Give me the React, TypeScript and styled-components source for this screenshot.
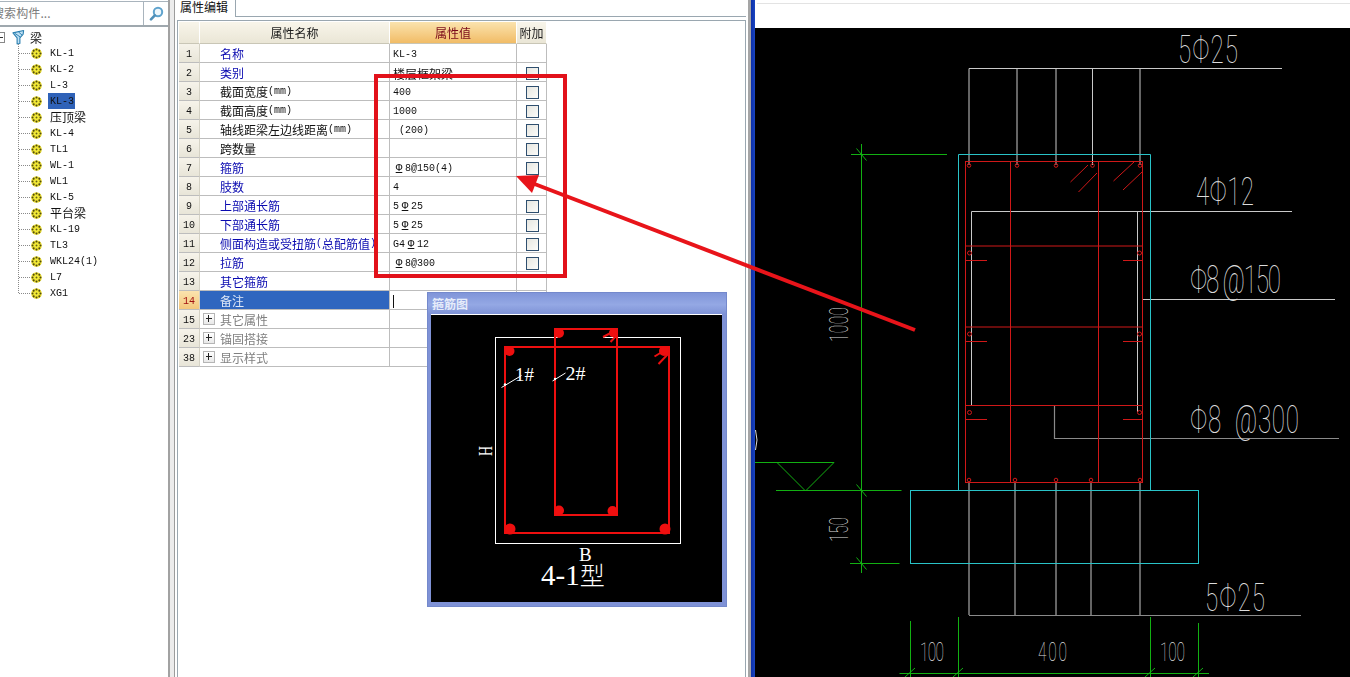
import React from 'react';
import styled, { createGlobalStyle } from 'styled-components';

const Global = createGlobalStyle`
  html, body { margin: 0; padding: 0; background: #fff; overflow: hidden; }
  #root { width: 1350px; height: 677px; }
`;

const Page = styled.div`
  position: relative;
  display: flex;
  width: 1350px;
  height: 677px;
  overflow: hidden;
  background: #fff;
  font-family: "Liberation Mono", "Noto Sans CJK SC", monospace;
  font-size: 10px;
  color: #111;
`;

/* ---------- left tree ---------- */
const LeftPanel = styled.aside`
  width: 168px;
  flex: none;
  display: flex;
  flex-direction: column;
  overflow: hidden;
`;
const SearchBar = styled.div`
  display: flex;
  margin-top: 1px;
  height: 26px;
  box-sizing: border-box;
  border-top: 1px solid #a9b4bd;
  border-bottom: 2px solid #9fa8ae;
`;
const SearchField = styled.div`
  width: 143px;
  border-right: 1px solid #a9b4bd;
  overflow: hidden;
  font: 12px/21px "Noto Sans CJK SC", sans-serif;
  color: #7c7c7c;
  text-indent: -8px;
  white-space: nowrap;
  letter-spacing: 0.1px;
`;
const SearchButton = styled.div`
  flex: 1;
  display: flex;
  align-items: center;
  justify-content: center;
`;
const Tree = styled.ul`
  position: relative;
  list-style: none;
  margin: 0;
  padding: 2px 0 0;
  will-change: transform;
  &::before {
    content: "";
    position: absolute;
    left: 18px;
    top: 17px;
    height: 249px;
    border-left: 1px dotted #8a8a8a;
  }
`;
const TreeRow = styled.li`
  position: relative;
  display: flex;
  align-items: center;
  height: 16px;
  padding-left: 31px;
  &::before {
    content: "";
    position: absolute;
    left: 19px;
    top: 8px;
    width: 11px;
    border-top: 1px dotted #8a8a8a;
  }
`;
const RootRow = styled.li`
  display: flex;
  align-items: center;
  height: 16px;
`;
const Collapse = styled.span`
  width: 4px;
  height: 9px;
  margin-right: 7px;
  border: 1px solid #888;
  border-left: 0;
  position: relative;
  &::after {
    content: "";
    position: absolute;
    left: 0;
    top: 4px;
    width: 3px;
    border-top: 1px solid #333;
  }
`;
const RootLabel = styled.span`
  margin-left: 5px;
`;
const TreeLabel = styled.span<{ $selected?: boolean }>`
  height: 16px;
  line-height: 18px;
  padding: 0 1px 0 2px;
  margin-left: 6px;
  background: ${(p) => (p.$selected ? '#2f62b8' : 'transparent')};
  white-space: nowrap;
`;
const Han = styled.span`
  font-family: "Noto Sans CJK SC", sans-serif;
  font-size: 12px;
`;
const TreeHan = styled(Han)`
  position: relative;
  top: -1px;
`;
const SteelMark = styled.span`
  display: inline-block;
  width: 12px;
  text-align: center;
  font-size: 11px;
  line-height: 11px;
  text-decoration: underline;
`;

/* ---------- splitter ---------- */
const Splitter = styled.div`
  width: 9px;
  flex: none;
  box-sizing: border-box;
  background: #ececec;
  border-left: 2px solid #a2a2a2;
  border-right: 2px solid #fff;
  box-shadow: inset -1px 0 0 #9c9c9c;
`;

/* ---------- property editor ---------- */
const Main = styled.main`
  width: 571px;
  flex: none;
  display: flex;
  flex-direction: column;
`;
const TabStrip = styled.div`
  height: 20px;
  flex: none;
  box-sizing: border-box;
  display: flex;
  align-items: flex-start;
  &::after {
    content: "";
    flex: 1;
    height: 16px;
    border-bottom: 1px solid #9aa7b0;
    margin-right: 2px;
  }
`;
const Tab = styled.div`
  width: 59px;
  height: 17px;
  box-sizing: border-box;
  padding-left: 3px;
  font: 12px/13px "Noto Sans CJK SC", sans-serif;
  color: #111;
  border-right: 1px solid #9aa7b0;
`;
const GridBox = styled.div`
  flex: 1;
  margin-right: 2px;
  padding: 1px;
  border: 1px solid #9aa7b0;
  border-bottom: 0;
`;
const Grid = styled.div`
  display: grid;
  width: 368px;
  grid-template-columns: 21px 190px 127px 30px;
  grid-template-rows: 22px;
  grid-auto-rows: 19px;
  will-change: transform;
`;
const HeaderCell = styled.div<{ $active?: boolean }>`
  display: flex;
  align-items: center;
  justify-content: center;
  font: 12px "Noto Sans CJK SC", sans-serif;
  color: ${(p) => (p.$active ? '#7a0a1a' : '#1a1a1a')};
  background: ${(p) =>
    p.$active
      ? 'linear-gradient(#fbe3ae, #f1bc66)'
      : 'linear-gradient(#f8f5ea, #eae6d6)'};
  border-right: 1px solid #fff;
  border-bottom: 1px solid #c9c6b6;
`;
const NumCell = styled.div<{ $active?: boolean }>`
  display: flex;
  align-items: center;
  justify-content: center;
  box-sizing: border-box;
  padding-top: 2px;
  font-size: 10px;
  color: ${(p) => (p.$active ? '#a01010' : '#111')};
  background: ${(p) =>
    p.$active
      ? 'linear-gradient(#fbe3ae, #f4c77c)'
      : 'linear-gradient(#f6f3ea, #e8e5d8)'};
  border-bottom: 1px solid #bdbdbd;
  border-right: 1px solid #d5d2c5;
`;
const NameCell = styled.div<{ $tone: 'blue' | 'black' | 'grey' | 'selected' }>`
  display: flex;
  align-items: center;
  box-sizing: border-box;
  padding-left: 20px;
  position: relative;
  white-space: nowrap;
  overflow: hidden;
  border-bottom: 1px solid #bdbdbd;
  border-right: 1px solid #bdbdbd;
  background: ${(p) => (p.$tone === 'selected' ? '#2f66bf' : '#fff')};
  color: ${(p) =>
    p.$tone === 'blue'
      ? '#0a0ab0'
      : p.$tone === 'grey'
      ? '#808080'
      : p.$tone === 'selected'
      ? '#dfe8f7'
      : '#111'};
`;
const Expand = styled.span`
  position: absolute;
  left: 3px;
  top: 3px;
  width: 12px;
  height: 12px;
  box-sizing: border-box;
  border: 1px solid #b5b5b5;
  background: linear-gradient(#fff, #e8e8e8);
  &::before, &::after {
    content: "";
    position: absolute;
    background: #222;
  }
  &::before { left: 2px; right: 2px; top: 4px; height: 1px; }
  &::after { top: 1px; bottom: 2px; left: 4px; width: 1px; }
`;
const ValueCell = styled.div`
  display: flex;
  align-items: center;
  box-sizing: border-box;
  padding: 2px 0 0 3px;
  white-space: pre;
  border-bottom: 1px solid #bdbdbd;
  border-right: 1px solid #bdbdbd;
`;
const Caret = styled.span`
  width: 1px;
  height: 13px;
  background: #111;
`;
const AddCell = styled.div`
  display: flex;
  align-items: center;
  justify-content: center;
  box-sizing: border-box;
  padding-top: 2px;
  border-bottom: 1px solid #bdbdbd;
  border-right: 1px solid #bdbdbd;
`;
const Check = styled.span`
  width: 13px;
  height: 13px;
  box-sizing: border-box;
  border: 1px solid #2f4f6f;
  background: linear-gradient(135deg, #e6e6e0, #fcfcfa);
  margin-left: 1px;
`;

/* ---------- stirrup dialog ---------- */
const Dialog = styled.section`
  position: absolute;
  left: 427px;
  top: 292px;
  width: 300px;
  height: 315px;
  box-sizing: border-box;
  display: flex;
  flex-direction: column;
  background: #7f92d6;
  border: 1px solid #7489cc;
  padding: 0 4px 4px 3px;
`;
const DialogTitle = styled.header`
  height: 21px;
  flex: none;
  margin: 0 -4px 0 -3px;
  padding-left: 4px;
  background: linear-gradient(#8095d9, #94a8e4 55%, #7f93d7);
  font: bold 12px/21px "Noto Sans CJK SC", sans-serif;
  color: #e6ecfa;
`;
const DialogBody = styled.div`
  flex: 1;
  background: #000;
  border-top: 1px solid #fff;
  display: flex;
`;

/* ---------- CAD ---------- */
const CadFrame = styled.div`
  flex: 1;
  display: flex;
  flex-direction: column;
  box-sizing: border-box;
  border-left: 3px solid #a5a5a5;
  position: relative;
  &::before {
    content: "";
    position: absolute;
    left: 0;
    top: 0;
    bottom: 0;
    width: 4px;
    background: linear-gradient(90deg, #0c2fa8, #1a45c0);
  }
`;
const CadTop = styled.div`
  height: 28px;
  flex: none;
  margin-left: 4px;
  box-sizing: border-box;
  padding-top: 3px;
  &::after {
    content: "";
    display: block;
    margin-left: 2px;
    border-top: 1px solid #e3e3e3;
  }
`;
const CadCanvas = styled.div`
  flex: 1;
  margin-left: 4px;
  background: #000;
  display: flex;
`;

/* ---------- overlays ---------- */
const RedFrame = styled.div`
  position: absolute;
  left: 374px;
  top: 74px;
  width: 193px;
  height: 204px;
  box-sizing: border-box;
  border: 4px solid #e2111a;
  pointer-events: none;
`;
const ArrowLayer = styled.svg`
  position: absolute;
  left: 0;
  top: 0;
  pointer-events: none;
`;

/* ---------- data ---------- */
const treeItems = ['KL-1', 'KL-2', 'L-3', 'KL-3', '压顶梁', 'KL-4', 'TL1', 'WL-1', 'WL1', 'KL-5', '平台梁', 'KL-19', 'TL3', 'WKL24(1)', 'L7', 'XG1'];

type Row = { n: number; name: string; value?: string; tone: 'blue' | 'black' | 'grey' | 'selected'; check?: boolean; expand?: boolean; caret?: boolean };
const rows: Row[] = [
  { n: 1, name: '名称', value: 'KL-3', tone: 'blue' },
  { n: 2, name: '类别', value: '楼层框架梁', tone: 'blue', check: true },
  { n: 3, name: '截面宽度(mm)', value: '400', tone: 'black', check: true },
  { n: 4, name: '截面高度(mm)', value: '1000', tone: 'black', check: true },
  { n: 5, name: '轴线距梁左边线距离(mm)', value: ' (200)', tone: 'black', check: true },
  { n: 6, name: '跨数量', tone: 'black', check: true },
  { n: 7, name: '箍筋', value: '~8@150(4)', tone: 'blue', check: true },
  { n: 8, name: '肢数', value: '4', tone: 'blue' },
  { n: 9, name: '上部通长筋', value: '5~25', tone: 'blue', check: true },
  { n: 10, name: '下部通长筋', value: '5~25', tone: 'blue', check: true },
  { n: 11, name: '侧面构造或受扭筋(总配筋值)', value: 'G4~12', tone: 'blue', check: true },
  { n: 12, name: '拉筋', value: '~8@300', tone: 'blue', check: true },
  { n: 13, name: '其它箍筋', tone: 'blue' },
  { n: 14, name: '备注', tone: 'selected', caret: true },
  { n: 15, name: '其它属性', tone: 'grey', expand: true },
  { n: 23, name: '锚固搭接', tone: 'grey', expand: true },
  { n: 38, name: '显示样式', tone: 'grey', expand: true },
];

const Mixed = ({ t, han: HanPart = Han }: { t: string; han?: typeof Han }) => (
  <>
    {t.split(/([\u4e00-\u9fff]+|~)/).map((part, i) =>
      part === '~' ? (
        <SteelMark key={i}>Φ</SteelMark>
      ) : /[\u4e00-\u9fff]/.test(part) ? (
        <HanPart key={i}>{part}</HanPart>
      ) : (
        <React.Fragment key={i}>{part}</React.Fragment>
      ),
    )}
  </>
);

/* ---------- icons ---------- */
const GearIcon = () => (
  <svg width="11" height="11" viewBox="0 0 11 11" style={{ flex: 'none' }}>
    <circle cx="5.5" cy="5.5" r="5.3" fill="#e9dc2c" />
    {[0, 45, 90, 135, 180, 225, 270, 315].map((a) => (
      <circle key={a} cx="5.5" cy="1.5" r="1" fill="#4f4a12" transform={`rotate(${a} 5.5 5.5)`} />
    ))}
    <circle cx="5.5" cy="5.5" r="2.3" fill="#f8f23e" />
    <circle cx="5.5" cy="5.5" r="1" fill="#6a6214" />
  </svg>
);
const FunnelIcon = () => (
  <svg width="13" height="17" viewBox="0 0 14 17" style={{ flex: 'none' }}>
    <path d="M1 3.5 L12.5 1 L12 5 L8.5 9 L8.5 15 L5.5 15.5 L5.5 9 Z" fill="#bfe0f4" stroke="#2a7fb0" strokeWidth="1.2" strokeLinejoin="round" />
    <path d="M3 4 L9 8 M7 2.5 L11 6" stroke="#2a7fb0" strokeWidth="1" />
  </svg>
);
const SearchIcon = () => (
  <svg width="15" height="15" viewBox="0 0 15 15">
    <circle cx="9" cy="6" r="4.2" fill="#eef7fc" stroke="#5fa3cd" strokeWidth="2" />
    <path d="M5.8 9.4 L2 13.4" stroke="#4f8fb8" strokeWidth="2.6" strokeLinecap="round" />
  </svg>
);

/* ---------- stirrup drawing ---------- */
const StirrupDrawing = () => (
  <svg width="291" height="287" viewBox="431 315 291 287" style={{ display: 'block' }}>
    <rect x="495.5" y="337.5" width="185" height="206" fill="none" stroke="#fff" />
    <path d="M558 337.5 H603" stroke="#000" strokeWidth="2" />
    <g fill="none" stroke="#ee0f0f" strokeWidth="2">
      <rect x="505" y="347" width="164" height="186" />
      <rect x="555" y="329" width="62" height="186" />
      <path d="M668.5 348 L654.5 356.5 M669 353 L658.5 364 M616.5 330 L603 337 M617 335 L610.5 342" />
    </g>
    <g fill="#ee0f0f">
      <circle cx="509.5" cy="351" r="5" />
      <circle cx="510" cy="529" r="5.5" />
      <circle cx="665" cy="529" r="5.5" />
      <circle cx="664" cy="351" r="5" />
      <circle cx="559" cy="333" r="5" />
      <circle cx="559" cy="510.5" r="5" />
      <circle cx="612.5" cy="511" r="5" />
      <circle cx="613" cy="333" r="4" />
    </g>
    <g stroke="#fff" strokeWidth="1" fill="#fff">
      <path d="M501.5 387.5 L521.5 375.5" />
      <path d="M552.5 381 L565.5 373" />
      <circle cx="505" cy="384.5" r="1.2" stroke="none" />
      <circle cx="555" cy="379" r="1.2" stroke="none" />
    </g>
    <g fill="#fff" fontFamily="'Liberation Serif', serif">
      <text x="515" y="381" fontSize="19" textLength="19" lengthAdjust="spacingAndGlyphs">1#</text>
      <text x="565.5" y="379.5" fontSize="19" textLength="20" lengthAdjust="spacingAndGlyphs">2#</text>
      <text x="579" y="561" fontSize="19">B</text>
      <text transform="translate(492 456) rotate(-90)" fontSize="18" textLength="10" lengthAdjust="spacingAndGlyphs">H</text>
      <text x="541" y="585" fontSize="29">
        4-1<tspan fontFamily="'Noto Sans CJK SC', serif" fontSize="25" fontWeight="300">型</tspan>
      </text>
    </g>
  </svg>
);

/* ---------- CAD drawing ---------- */
const CadTextBase = styled.text`
  font-family: "Roboto", "Liberation Sans", sans-serif;
  font-weight: 100;
  fill: #dcdcdc;
`;
const CAD_NARROW = 0.62;
const CadLabel = ({ x, y, w, size, rotate, children }: { x: number; y: number; w: number; size: number; rotate?: boolean; children: string }) => (
  <CadTextBase
    transform={`translate(${x} ${y})${rotate ? ' rotate(-90)' : ''} scale(${CAD_NARROW} 1)`}
    fontSize={size}
    textLength={w / CAD_NARROW}
    lengthAdjust="spacing"
    xmlSpace="preserve"
  >
    {children}
  </CadTextBase>
);
const white = '#c9c9c9';
const green = '#12b012';
const cyan = '#29c3c8';
const red = '#d01818';
const steelTop = [969, 1017, 1056, 1092.5, 1140];
const steelBottom = [969, 1015, 1056, 1091, 1140];

const Tick = ({ x, y }: { x: number; y: number }) => (
  <path d={`M${x - 5} ${y - 6} L${x + 5} ${y + 6}`} stroke={green} strokeWidth="1" />
);

const CadDrawing = () => (
  <svg width="595" height="649" viewBox="755 28 595 649" style={{ display: 'block' }}>
    <g stroke={white} strokeWidth="1" fill="none">
      <path d="M969 68.5 H1282" />
      {steelTop.map((x) => (
        <path key={x} d={`M${x} 68.5 V165`} />
      ))}
      <path d="M971.5 405 V211.5 H1292" />
      <path d="M1137.5 211.5 V412" />
      <path d="M1142 299.5 H1335" />
      {steelBottom.map((x) => (
        <path key={x} d={`M${x} 483 V615`} />
      ))}
    </g>
    <g stroke="#8a8a8a" strokeWidth="1.2" fill="none">
      <path d="M1054.5 405 V438.5 H1339" />
      <path d="M969 615.5 H1301" />
    </g>
    <g stroke={cyan} strokeWidth="1" fill="none">
      <path d="M958.5 490.5 V154.5 H1150.5 V490.5" />
      <rect x="910.5" y="490.5" width="288" height="73" />
    </g>
    <g stroke={red} strokeWidth="1" fill="none">
      <rect x="965.5" y="161.5" width="177" height="321" />
      <path d="M1010.5 161.5 V483 M1098.5 161.5 V483" />
      <path d="M965.5 246 H1143 M965.5 327 H1143 M965.5 405.5 H1143" />
      <path d="M966 260.5 H987 M1123 260.5 H1143 M966 341.5 H987 M1123 341.5 H1143 M966 419.5 H987 M1123 419.5 H1143" />
      <path d="M1070.5 182 L1088 165 M1078.5 192 L1097 173 M1113.5 181 L1134 162 M1123 190 L1142 172" />
      {steelTop.map((x) => (
        <circle key={x} cx={x} cy="165.5" r="1.8" />
      ))}
      {steelBottom.map((x) => (
        <circle key={x} cx={x} cy="480" r="1.8" />
      ))}
      {[253, 334, 412.5].map((y) => (
        <React.Fragment key={y}>
          <circle cx="969.5" cy={y} r="2" />
          <circle cx="1139.5" cy={y} r="2" />
        </React.Fragment>
      ))}
    </g>
    <g stroke={green} strokeWidth="1" fill="none">
      <path d="M861.5 144 V573" />
      <path d="M851 154.5 H947 M776 490.5 H901.5 M850 563.5 H899.5" />
      <path d="M755 462.5 H834 L805.5 491 L777 462.5" />
      <path d="M910.5 621 V677 M958.5 617 V677 M1150.5 617 V677 M1198.5 623 V677" />
      <path d="M899.5 673.5 H1209" />
      <path d="M905 677 L915 668 M953 677 L963 668 M1145 677 L1155 668 M1193 677 L1203 668" />
    </g>
    <Tick x={861.5} y={154.5} />
    <Tick x={861.5} y={490.5} />
    <Tick x={861.5} y={563.5} />
    <path d="M755.5 430 Q758.5 440 755.5 450" stroke="#ddd" fill="none" />
    <CadLabel x={1178} y={63} w={60} size={39}>5Φ25</CadLabel>
    <CadLabel x={1196} y={205} w={58} size={39}>4Φ12</CadLabel>
    <CadLabel x={1190} y={293} w={91} size={39}>Φ8 @150</CadLabel>
    <CadLabel x={1190} y={433} w={109} size={39}>Φ8  @300</CadLabel>
    <CadLabel x={1205} y={611} w={60} size={39}>5Φ25</CadLabel>
    <CadLabel x={920} y={661} w={24} size={25}>100</CadLabel>
    <CadLabel x={1038} y={661} w={29} size={25}>400</CadLabel>
    <CadLabel x={1160} y={661} w={25} size={25}>100</CadLabel>
    <CadLabel x={848} y={342} w={35} size={25} rotate>1000</CadLabel>
    <CadLabel x={848} y={542} w={25} size={25} rotate>150</CadLabel>
  </svg>
);

export default function App() {
  return (
    <Page>
      <Global />
      <LeftPanel>
        <SearchBar>
          <SearchField>搜索构件...</SearchField>
          <SearchButton>
            <SearchIcon />
          </SearchButton>
        </SearchBar>
        <Tree>
          <RootRow>
            <Collapse />
            <FunnelIcon />
            <RootLabel>
              <Han>梁</Han>
            </RootLabel>
          </RootRow>
          {treeItems.map((item) => (
            <TreeRow key={item}>
              <GearIcon />
              <TreeLabel $selected={item === 'KL-3'}>
                <Mixed t={item} han={TreeHan} />
              </TreeLabel>
            </TreeRow>
          ))}
        </Tree>
      </LeftPanel>
      <Splitter />
      <Main>
        <TabStrip>
          <Tab>属性编辑</Tab>
        </TabStrip>
        <GridBox>
          <Grid>
            <HeaderCell />
            <HeaderCell>属性名称</HeaderCell>
            <HeaderCell $active>属性值</HeaderCell>
            <HeaderCell>附加</HeaderCell>
            {rows.map((r) => (
              <React.Fragment key={r.n}>
                <NumCell $active={r.tone === 'selected'}>{r.n}</NumCell>
                <NameCell $tone={r.tone}>
                  {r.expand && <Expand />}
                  <Mixed t={r.name} />
                </NameCell>
                <ValueCell>
                  {r.value && <Mixed t={r.value} />}
                  {r.caret && <Caret />}
                </ValueCell>
                <AddCell>{r.check && <Check />}</AddCell>
              </React.Fragment>
            ))}
          </Grid>
        </GridBox>
      </Main>
      <CadFrame>
        <CadTop />
        <CadCanvas>
          <CadDrawing />
        </CadCanvas>
      </CadFrame>
      <RedFrame />
      <Dialog>
        <DialogTitle>箍筋图</DialogTitle>
        <DialogBody>
          <StirrupDrawing />
        </DialogBody>
      </Dialog>
      <ArrowLayer width="1350" height="677" viewBox="0 0 1350 677">
        <path d="M915 330 L532 183" stroke="#e8141a" strokeWidth="4" fill="none" />
        <path d="M516 176 L539 175 L532 193 Z" fill="#e8141a" />
      </ArrowLayer>
    </Page>
  );
}
